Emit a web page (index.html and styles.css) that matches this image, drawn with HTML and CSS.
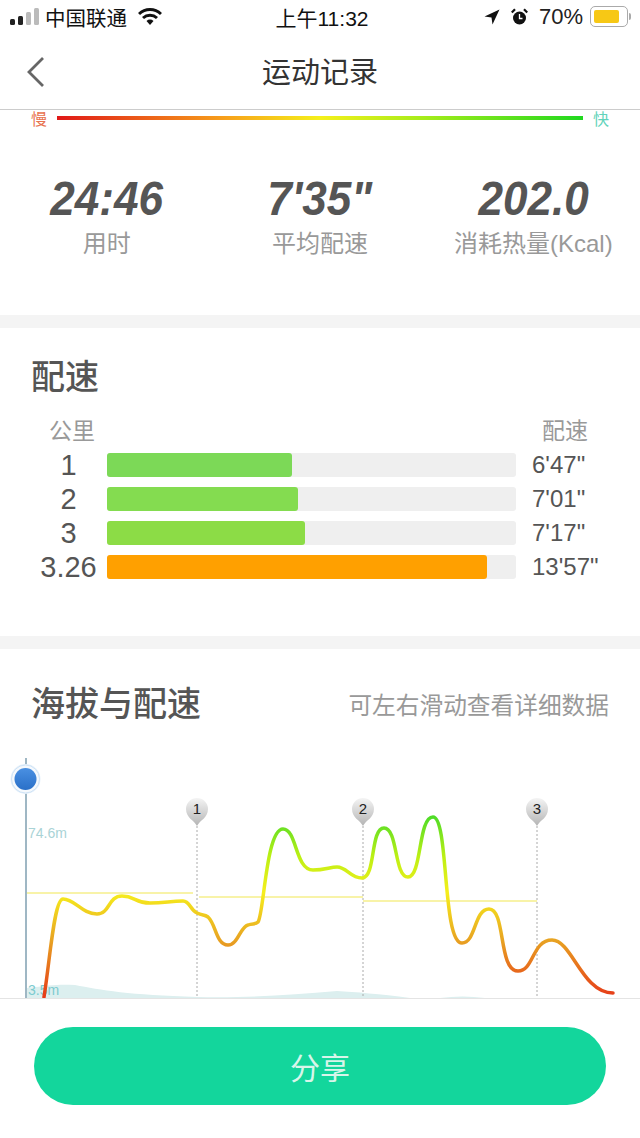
FILE: index.html
```html
<!DOCTYPE html>
<html lang="zh-CN">
<head>
    <meta charset="UTF-8">
    <meta name="viewport" content="width=device-width, initial-scale=1.0">
    <title>运动记录</title>
    <link rel="stylesheet" href="styles.css">
</head>
<body>
    <div class="page">
        <div class="status-bar">
            <div class="status-left">
                <svg class="signal" width="29" height="20" viewBox="0 0 29 20">
                    <rect x="0" y="12" width="5" height="6" rx="1.5" fill="#222"/>
                    <rect x="8" y="9" width="5" height="9" rx="1.5" fill="#222"/>
                    <rect x="16" y="5" width="5" height="13" rx="1.5" fill="#bbb"/>
                    <rect x="24" y="1" width="5" height="17" rx="1.5" fill="#bbb"/>
                </svg>
                <span class="carrier">中国联通</span>
                <svg class="wifi" width="24" height="18" viewBox="0 0 24 18">
                    <path d="M1 6 A16 16 0 0 1 23 6" fill="none" stroke="#111" stroke-width="3"/>
                    <path d="M5 10 A10.500 10.500 0 0 1 19 10" fill="none" stroke="#111" stroke-width="3"/>
                    <path d="M8.500 13 L12 17 L15.500 13 A5 5 0 0 0 8.500 13 Z" fill="#111"/>
                </svg>
            </div>
            <div class="status-time">上午11:32</div>
            <div class="status-right">
                <svg width="16" height="16" viewBox="0 0 16 16">
                    <path d="M15.500 .5 L.5 7.500 L7.500 8.500 L8.500 15.500 Z" fill="#111"/>
                </svg>
                <svg class="alarm" width="17" height="18" viewBox="0 0 17 18">
                    <circle cx="8.500" cy="10" r="6.500" fill="#111"/>
                    <path d="M8.500 6 V10.500 H11.500" fill="none" stroke="#fff" stroke-width="1.300"/>
                    <path d="M.8 4.500 L4 1.200 M16.200 4.500 L13 1.200" stroke="#111" stroke-width="2.200"/>
                </svg>
                <span class="battery-text">70%</span>
                <div class="battery">
                    <div class="battery-fill"></div>
                </div>
                <div class="battery-tip"></div>
            </div>
        </div>

        <header class="nav">
            <svg class="back" width="20" height="32" viewBox="0 0 20 32">
                <path d="M17 2 L3 16 L17 30" fill="none" stroke="#666" stroke-width="2.800"/>
            </svg>
            <h1>运动记录</h1>
        </header>

        <section class="summary">
            <div class="legend">
                <span class="slow">慢</span>
                <div class="legend-bar"></div>
                <span class="fast">快</span>
            </div>
            <div class="stats">
                <div class="stat">
                    <div class="stat-value">24:46</div>
                    <div class="stat-label">用时</div>
                </div>
                <div class="stat">
                    <div class="stat-value">7'35"</div>
                    <div class="stat-label">平均配速</div>
                </div>
                <div class="stat">
                    <div class="stat-value">202.0</div>
                    <div class="stat-label">消耗热量(Kcal)</div>
                </div>
            </div>
        </section>

        <section class="pace">
            <h2>配速</h2>
            <div class="pace-head">
                <span class="col-km">公里</span>
                <span class="col-pace">配速</span>
            </div>
            <div class="pace-rows">
                <div class="pace-row">
                    <span class="km">1</span>
                    <div class="track"><div class="fill" style="width:185px;background:#7cd957"></div></div>
                    <span class="time">6'47"</span>
                </div>
                <div class="pace-row">
                    <span class="km">2</span>
                    <div class="track"><div class="fill" style="width:191px;background:#84dc50"></div></div>
                    <span class="time">7'01"</span>
                </div>
                <div class="pace-row">
                    <span class="km">3</span>
                    <div class="track"><div class="fill" style="width:198px;background:#8cdc46"></div></div>
                    <span class="time">7'17"</span>
                </div>
                <div class="pace-row">
                    <span class="km">3.26</span>
                    <div class="track"><div class="fill" style="width:380px;background:#ffa000"></div></div>
                    <span class="time">13'57"</span>
                </div>
            </div>
        </section>

        <section class="elevation">
            <div class="elevation-head">
                <h2>海拔与配速</h2>
                <span class="hint">可左右滑动查看详细数据</span>
            </div>
            <svg class="chart" width="640" height="248" viewBox="0 750 640 248">
                <defs>
                    <linearGradient id="speed" gradientUnits="userSpaceOnUse" x1="0" y1="817" x2="0" y2="997">
                        <stop offset="0" stop-color="#4fdc28"/>
                        <stop offset=".22" stop-color="#bcf014"/>
                        <stop offset=".42" stop-color="#f6ee1c"/>
                        <stop offset=".68" stop-color="#e8a422"/>
                        <stop offset="1" stop-color="#e63a18"/>
                    </linearGradient>
                    <linearGradient id="pin" x1="0" y1="0" x2="0" y2="1">
                        <stop offset="0" stop-color="#f4f4f4"/>
                        <stop offset="1" stop-color="#b4b4b4"/>
                    </linearGradient>
                    <linearGradient id="ball" x1="0" y1="0" x2="0" y2="1">
                        <stop offset="0" stop-color="#4a90e2"/>
                        <stop offset="1" stop-color="#2a70c8"/>
                    </linearGradient>
                </defs>

                <!-- 海拔 -->
                <path class="area" d="M27 998 V988 C50 985 60 984 75 985 C100 990 130 995 197 997 C250 998 290 995 337 991 C355 992 380 994 410 998 Z"/>
                <path class="area" d="M440 998 C455 996 470 996 485 998 Z"/>
                <text class="axis" x="28" y="838">74.6m</text>
                <text class="axis axis-low" x="28" y="995">3.5m</text>

                <!-- 公里标记 -->
                <path class="km-line" d="M197 826 V998 M363 826 V998 M537 826 V998"/>

                <!-- 每公里平均配速 -->
                <path class="avg" d="M27 893 H193 M199 897 H363 M363 901 H537"/>

                <path class="speed-line" d="M44 997 C50 960 54 899 63 899 C75 899 82 914 97 914 C110 914 108 896 122 896 C135 896 135 903 150 903 C165 903 170 901 183 901 C190 901 190 910 197 913 C203 916 204 914 208 917 C216 924 216 945 228 945 C238 945 240 927 248 925 C253 923 255 925 258 922 C264 914 266 829 283 829 C297 829 295 870 313 870 C325 870 330 867 337 867 C347 867 350 878 362 878 C376 878 370 828 384 828 C398 828 394 877 408 877 C422 877 418 817 433 817 C449 817 442 943 462 943 C476 943 474 909 489 909 C506 909 498 971 518 971 C534 971 532 940 552 940 C572 940 582 993 613 993"/>

                <g class="pin" transform="translate(197 0)">
                    <path d="M0 826 C-3 820 -11 818 -11 809 A11 11 0 0 1 11 809 C11 818 3 820 0 826 Z"/>
                    <text x="0" y="814">1</text>
                </g>
                <g class="pin" transform="translate(363 0)">
                    <path d="M0 826 C-3 820 -11 818 -11 809 A11 11 0 0 1 11 809 C11 818 3 820 0 826 Z"/>
                    <text x="0" y="814">2</text>
                </g>
                <g class="pin" transform="translate(537 0)">
                    <path d="M0 826 C-3 820 -11 818 -11 809 A11 11 0 0 1 11 809 C11 818 3 820 0 826 Z"/>
                    <text x="0" y="814">3</text>
                </g>

                <line class="cursor" x1="26" y1="758" x2="26" y2="998"/>
                <circle cx="25.500" cy="779" r="15" fill="#e6f1fb"/>
                <circle cx="25.500" cy="779" r="14" fill="#fff" fill-opacity=".6" stroke="#cfe3f6"/>
                <circle cx="25.500" cy="779" r="11" fill="url(#ball)"/>
            </svg>
        </section>

        <footer class="share-bar">
            <button class="share-button">分享</button>
        </footer>
    </div>
</body>
</html>
```

FILE: styles.css
```css
* {
    box-sizing: border-box;
}

html, body {
    margin: 0;
    padding: 0;
    background-color: #ffffff;
}

body {
    font-family: "Liberation Sans", "Noto Sans CJK SC", sans-serif;
    color: #333333;
}

.page {
    display: flex;
    flex-direction: column;
    width: 640px;
    height: 1138px;
    overflow: hidden;
}

h1, h2 {
    margin: 0;
    font-weight: 500;
}

/* 状态栏 */
.status-bar {
    display: grid;
    grid-template-columns: 1fr auto 1fr;
    align-items: center;
    height: 36px;
    flex-shrink: 0;
    padding: 0 9px 3px 10px;
    color: #111111;
}

.status-left, .status-right {
    display: flex;
    align-items: center;
}

.status-right {
    justify-content: flex-end;
}

.carrier {
    margin-left: 6px;
    font-size: 20.5px;
}

.wifi {
    margin-left: 11px;
}

.status-time {
    font-size: 21px;
    padding-left: 3px;
}

.alarm {
    margin-left: 11px;
}

.battery-text {
    margin-left: 11px;
    font-size: 22px;
    color: #222222;
}

.battery {
    width: 38px;
    height: 21px;
    margin-left: 7px;
    padding: 3px;
    border: 1px solid #aaaaaa;
    border-radius: 5px;
}

.battery-fill {
    width: 25px;
    height: 100%;
    border-radius: 2px;
    background-color: #f7c815;
}

.battery-tip {
    width: 2px;
    height: 7px;
    margin-left: 1px;
    border-radius: 0 2px 2px 0;
    background-color: #aaaaaa;
}

/* 标题栏 */
.nav {
    position: relative;
    display: flex;
    align-items: center;
    justify-content: center;
    height: 74px;
    flex-shrink: 0;
    padding-bottom: 5px;
    border-bottom: 1px solid #cccccc;
}

.nav h1 {
    font-size: 29px;
    font-weight: 400;
    color: #333333;
}

.back {
    position: absolute;
    left: 26px;
    top: 20px;
}

/* 总览 */
.summary {
    height: 218px;
    flex-shrink: 0;
    border-bottom: 13px solid #f4f4f4;
}

.legend {
    display: flex;
    align-items: center;
    gap: 10px;
    height: 15px;
    padding: 0 31px;
    font-size: 16px;
}

.slow {
    color: #e8734f;
}

.fast {
    color: #62d3ba;
}

.legend-bar {
    flex: 1;
    height: 4px;
    background: linear-gradient(to right, #e01818, #f7a01a 32%, #f5f01a 50%, #a4ec1a 70%, #1fd81f);
}

.stats {
    display: grid;
    grid-template-columns: repeat(3, 1fr);
    margin-top: 48px;
}

.stat {
    text-align: center;
}

.stat-value {
    font-size: 49px;
    font-weight: bold;
    font-style: italic;
    line-height: 50px;
    color: #555555;
    transform: scaleX(.9);
}

.stat-label {
    margin-top: 6px;
    font-size: 24px;
    line-height: 30px;
    color: #999999;
    white-space: nowrap;
}

/* 配速 */
.pace {
    height: 321px;
    flex-shrink: 0;
    padding-top: 28px;
    border-bottom: 13px solid #f4f4f4;
}

.pace h2, .elevation h2 {
    font-size: 34px;
    line-height: 42px;
    color: #555555;
}

.pace h2 {
    padding-left: 31px;
}

.pace-head {
    display: flex;
    justify-content: space-between;
    margin-top: 18px;
    padding: 0 52px 0 49px;
    font-size: 23px;
    line-height: 30px;
    color: #999999;
}

.pace-rows {
    display: flex;
    flex-direction: column;
    gap: 10px;
    margin-top: 7px;
}

.pace-row {
    display: flex;
    align-items: center;
    height: 24px;
    padding-left: 31px;
    font-size: 29px;
    color: #555555;
}

.km {
    width: 76px;
    padding-right: 1px;
    text-align: center;
}

.track {
    width: 409px;
    height: 24px;
    border-radius: 3px;
    background-color: #efefef;
}

.fill {
    height: 100%;
    border-radius: 3px;
}

.time {
    margin-left: 16px;
    font-size: 24px;
    white-space: nowrap;
}

/* 海拔与配速 */
.elevation {
    height: 349px;
    flex-shrink: 0;
    padding-top: 34px;
    overflow: hidden;
}

.elevation-head {
    display: flex;
    align-items: center;
    justify-content: space-between;
    height: 42px;
    margin-bottom: 25px;
    padding: 0 31px;
}

.hint {
    font-size: 23.7px;
    color: #999999;
}

.chart {
    display: block;
}

.area {
    fill: #dcefef;
}

.axis {
    font-size: 14px;
    fill: #a9d3d6;
}

.axis-low {
    fill: #7ccbd0;
}

.km-line {
    fill: none;
    stroke: #aaaaaa;
    stroke-width: 1;
    stroke-dasharray: 2 2;
}

.avg {
    fill: none;
    stroke: #f6f08c;
    stroke-width: 1.5;
}

.speed-line {
    fill: none;
    stroke: url(#speed);
    stroke-width: 3.5;
    stroke-linecap: round;
}

.cursor {
    stroke: #7f9fb0;
    stroke-width: 1.5;
}

.pin path {
    fill: url(#pin);
}

.pin text {
    font-size: 15px;
    fill: #222222;
    text-anchor: middle;
}

/* 分享 */
.share-bar {
    display: flex;
    justify-content: center;
    flex: 1;
    padding-top: 28px;
    border-top: 1px solid #e4e4e4;
}

.share-button {
    width: 572px;
    height: 78px;
    border: none;
    border-radius: 39px;
    background-color: #13d69c;
    color: #d8f5ea;
    font-family: "Noto Sans CJK SC", sans-serif;
    font-size: 30px;
}
```
